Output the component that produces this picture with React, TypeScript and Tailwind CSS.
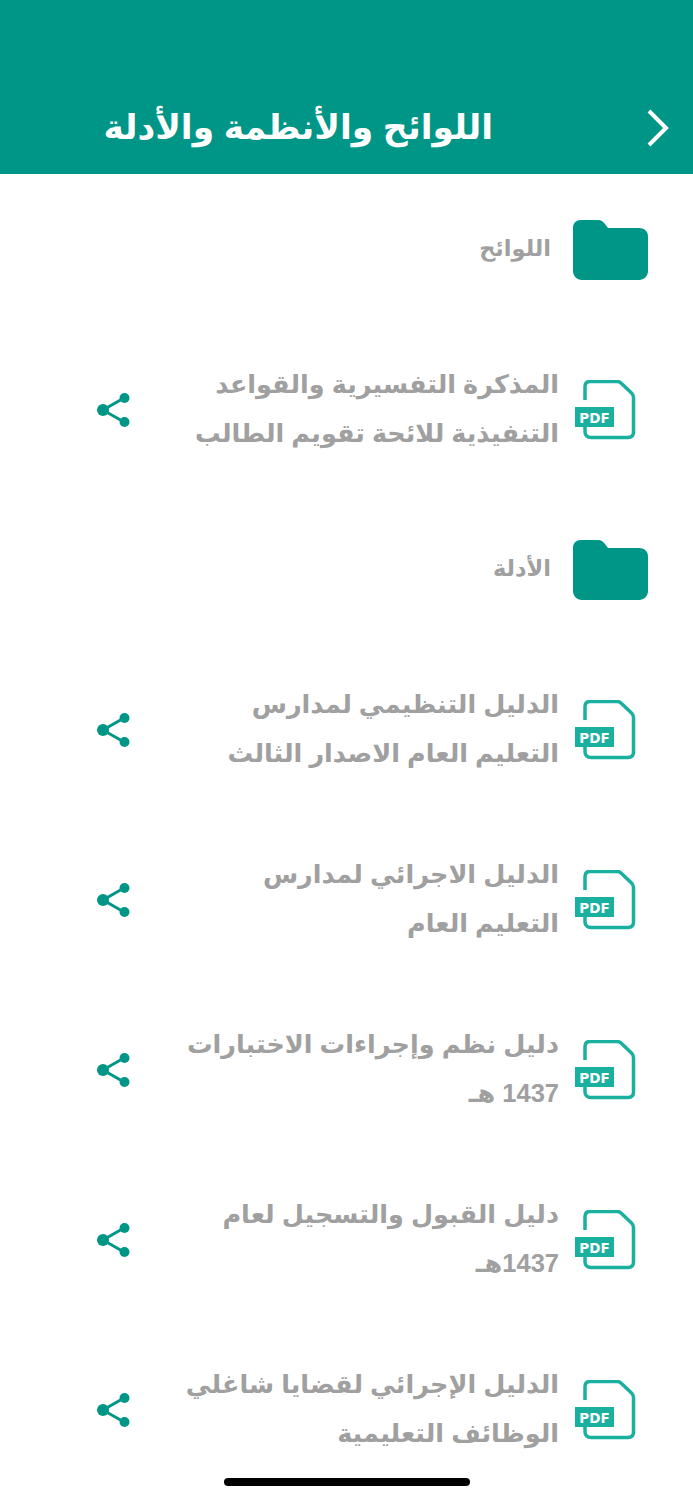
import React from 'react';

const sections = [
  { type: 'folder', title: 'اللوائح' },
  { type: 'file', lines: ['المذكرة التفسيرية والقواعد', 'التنفيذية للائحة تقويم الطالب'] },
  { type: 'folder', title: 'الأدلة' },
  { type: 'file', lines: ['الدليل التنظيمي لمدارس', 'التعليم العام الاصدار الثالث'] },
  { type: 'file', lines: ['الدليل الاجرائي لمدارس', 'التعليم العام'] },
  { type: 'file', lines: ['دليل نظم وإجراءات الاختبارات', '1437 هـ'] },
  { type: 'file', lines: ['دليل القبول والتسجيل لعام', '1437هـ'] },
  { type: 'file', lines: ['الدليل الإجرائي لقضايا شاغلي', 'الوظائف التعليمية'] },
];

function FolderIcon() {
  return (
    <svg width="75" height="60" viewBox="0 0 75 60" className="shrink-0 mt-[1px]">
      <path d="M8 0H25C28 0 30 1.5 32 4L35 8H66C71 8 75 11 75 16V51C75 56 71 60 66 60H9C4 60 0 56 0 51V8C0 3 3 0 8 0Z" fill="#009687" />
    </svg>
  );
}

function PdfIcon() {
  return (
    <svg width="62" height="60" viewBox="0 0 62 60" className="shrink-0 mt-[2px]">
      <path d="M11 20V7C11 3.5 13 1.5 16 1.5H43C45 1.5 46 2 47 3L57.5 13C59 14.5 59.5 15.5 59.5 17.5V52C59.5 55.5 57.5 57.5 54 57.5H17C13.5 57.5 11 55.5 11 52V45" fill="none" stroke="#1ab09f" strokeWidth="3.5" strokeLinejoin="round" />
      <rect x="1" y="27" width="39" height="20" fill="#1ab09f" />
      <text x="20.5" y="42.5" textAnchor="middle" fontFamily="DejaVu Sans, sans-serif" fontSize="13.5" fontWeight="700" fill="#ffffff">PDF</text>
    </svg>
  );
}

function ShareIcon() {
  return (
    <svg width="34" height="36" viewBox="0 0 34 36" className="shrink-0 mt-[1px]">
      <path d="M28 6L7 18L28 30" fill="none" stroke="#009687" strokeWidth="3" />
      <circle cx="28.5" cy="6" r="5" fill="#009687" />
      <circle cx="7" cy="18" r="6" fill="#009687" />
      <circle cx="28.5" cy="30" r="5" fill="#009687" />
    </svg>
  );
}

export default function App() {
  return (
    <div dir="rtl" className="relative w-[693px] h-[1500px] overflow-hidden bg-white font-['Liberation_Sans','DejaVu_Sans',sans-serif]">
      <header className="h-[174px] bg-[#009687] flex items-end pb-[24px] pr-[200px]">
        <h1 className="text-[34.5px] leading-[46px] font-bold text-white whitespace-nowrap">اللوائح والأنظمة والأدلة</h1>
      </header>
      <svg width="24" height="38" viewBox="0 0 24 38" className="absolute left-[646px] top-[109px]">
        <path d="M3 2L20 19L3 36" fill="none" stroke="#ffffff" strokeWidth="4" />
      </svg>

      <main>
        {sections.map((s, i) =>
          s.type === 'folder' ? (
            <div key={i} className="h-[150px] flex items-center pr-[45px] gap-[22px]">
              <FolderIcon />
              <span className="text-[22.5px] font-bold text-[#a0a0a0]">{s.title}</span>
            </div>
          ) : (
            <div key={i} className="h-[170px] flex items-center pr-[57px] pl-[96px]">
              <PdfIcon />
              <div className="flex-1 mr-[15px] text-[25.5px] leading-[49px] font-bold text-[#a0a0a0] whitespace-nowrap">
                {s.lines?.map((l, j) => <div key={j}>{l}</div>)}
              </div>
              <ShareIcon />
            </div>
          )
        )}
      </main>

      <div className="absolute left-[224px] top-[1478px] w-[246px] h-[8px] rounded-full bg-black" />
    </div>
  );
}
